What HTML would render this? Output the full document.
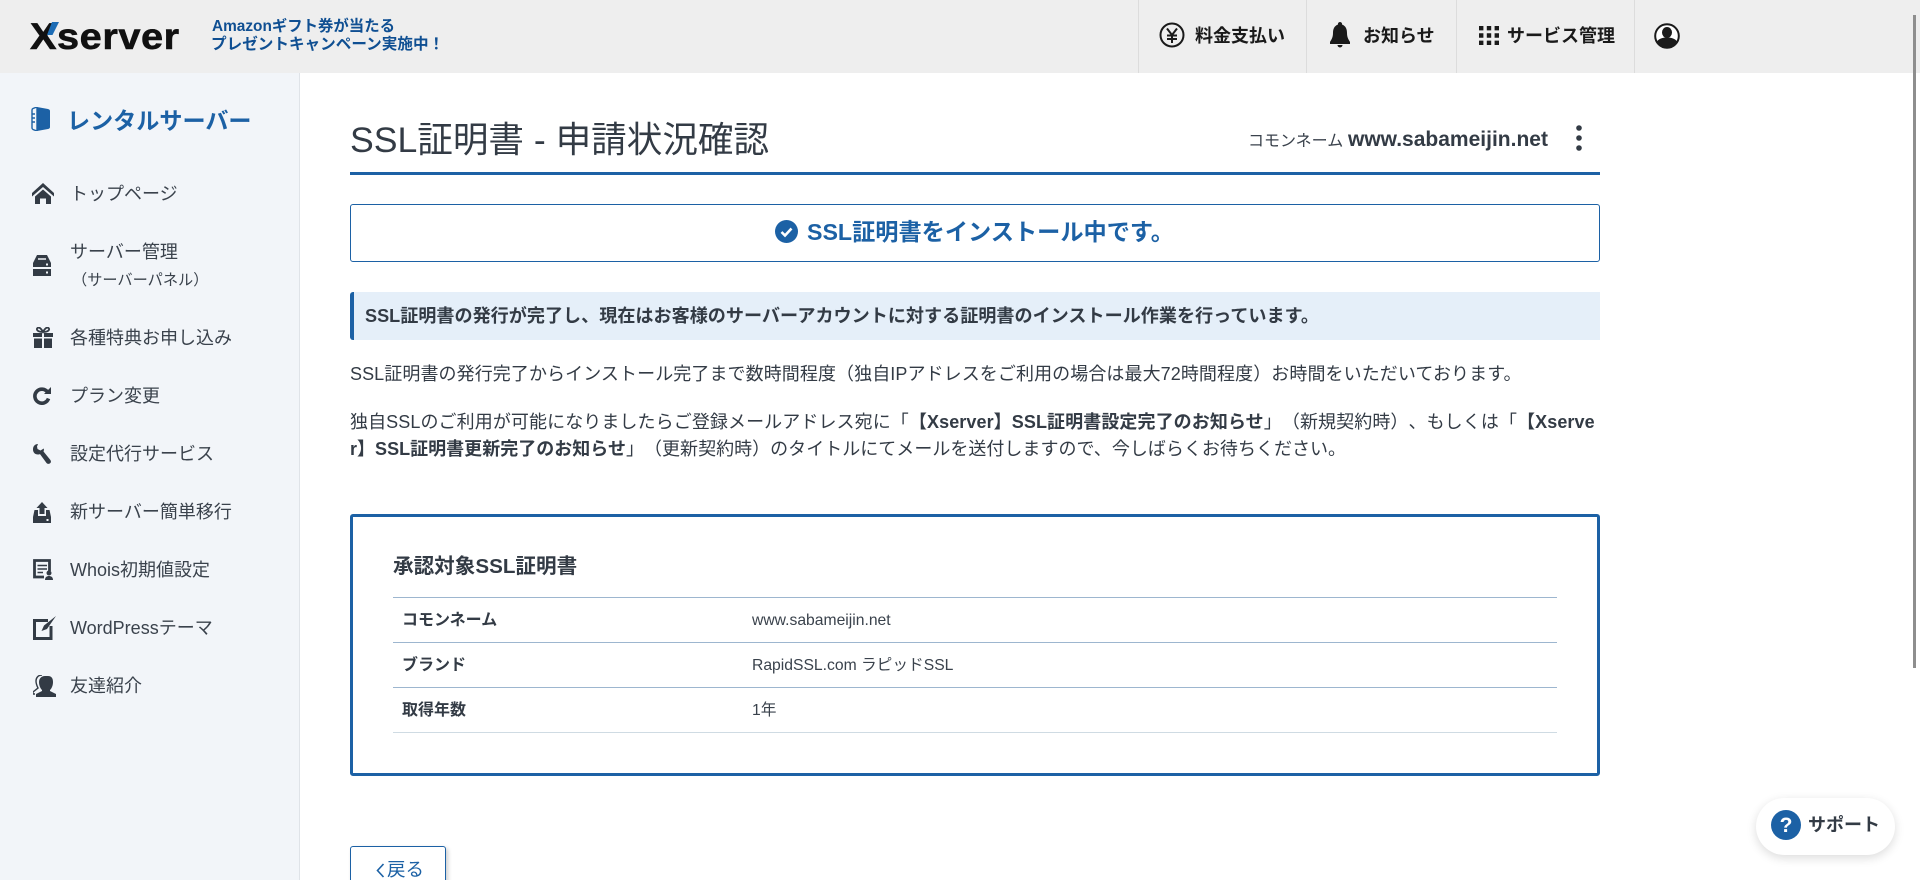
<!DOCTYPE html>
<html lang="ja"><head><meta charset="utf-8"><title>SSL証明書 - 申請状況確認</title>
<style>
*{box-sizing:border-box}
html,body{margin:0;padding:0;width:1920px;height:880px;overflow:hidden;background:#fff}
body{position:relative;font-family:"Liberation Sans","Noto Sans CJK JP",sans-serif;color:#333b45;font-size:18px;text-spacing-trim:space-all}
.a{position:absolute;white-space:nowrap}
#hd{left:0;top:0;width:1920px;height:73px;background:#eee}
.sep{position:absolute;top:0;width:1px;height:73px;background:#dcdcdc}
.hi{font-weight:bold;color:#1a1a1a;font-size:18px;line-height:24px;top:24px}
#sb{left:0;top:73px;width:300px;height:807px;background:#f2f5f9;border-right:1px solid #dfe3e8}
.n{left:70px;font-size:18px;line-height:26px;color:#3a424c}
svg{position:absolute;display:block}
b{font-weight:bold}
.rule{position:absolute;left:393px;width:1164px;height:1px;background:#9db6cf}
.th{left:402px;font-size:16px;font-weight:bold;line-height:22px;color:#333b45}
.td{left:752px;font-size:15.7px;line-height:22px;color:#3a424c}
</style></head><body>
<div class="a" id="hd"></div>
<div class="a" style="left:30px;top:13px;font-size:37.5px;font-weight:bold;line-height:46px;color:#111;letter-spacing:.5px;-webkit-text-stroke:.6px #111;transform:scaleX(1.06);transform-origin:left center">Xserver</div>
<svg style="left:47px;top:22px" width="12" height="13" viewBox="0 0 12 13"><path d="M5 0H12L5.500 13H0Z" fill="#1c6cb5"/></svg>
<div class="a" style="left:212px;top:18px;font-size:15.4px;font-weight:bold;line-height:18px;color:#0f4f92">Amazonギフト券が当たる</div>
<div class="a" style="left:211px;top:36px;font-size:15.6px;font-weight:bold;line-height:18px;color:#0f4f92">プレゼントキャンペーン実施中！</div>

<div class="sep" style="left:1138px"></div><div class="sep" style="left:1306px"></div><div class="sep" style="left:1456px"></div><div class="sep" style="left:1634px"></div>
<svg style="left:1159px;top:22px" width="26" height="26" viewBox="0 0 26 26"><circle cx="13" cy="13" r="11.500" fill="none" stroke="#1a1a1a" stroke-width="2"/><path d="M8 6.500L13 13L18 6.500M8 13.500H18M8 17H18M13 13V21" fill="none" stroke="#1a1a1a" stroke-width="2"/></svg>
<div class="a hi" style="left:1195px">料金支払い</div>
<svg style="left:1329px;top:22px" width="22" height="26" viewBox="0 0 22 26"><path d="M11 0a2 2 0 0 1 2 2.500C17 4 18 7.500 18 11c0 5 2 7 3 9v2H1v-2c1-2 3-4 3-9 0-3.500 1-7 5-8.500A2 2 0 0 1 11 0ZM8.500 23h5a2.500 2.500 0 0 1-5 0Z" fill="#1a1a1a"/></svg>
<div class="a hi" style="left:1363px">お知らせ</div>
<svg style="left:1479px;top:26px" width="20" height="19" viewBox="0 0 20 19" fill="#1a1a1a"><path d="M0 0h4.400v4.400H0zM7.800 0h4.400v4.400H7.800zM15.600 0h4.400v4.400h-4.400zM0 7.300h4.400v4.400H0zM7.800 7.300h4.400v4.400H7.800zM15.600 7.300h4.400v4.400h-4.400zM0 14.600h4.400V19H0zM7.800 14.600h4.400V19H7.800zM15.600 14.600h4.400V19h-4.400z"/></svg>
<div class="a hi" style="left:1507px">サービス管理</div>
<svg style="left:1654px;top:23px" width="26" height="26" viewBox="0 0 26 26"><circle cx="13" cy="13" r="11.800" fill="#fff" stroke="#1a1a1a" stroke-width="2"/><ellipse cx="13" cy="9.500" rx="5" ry="5.500" fill="#1a1a1a"/><path d="M2.500 19c2-3 5.500-4.500 10.500-4.500s8.500 1.500 10.500 4.500A12 12 0 0 1 2.500 19Z" fill="#1a1a1a"/></svg>

<div class="a" style="left:1913px;top:15px;width:3px;height:653px;background:#8e8e8e"></div>

<div class="a" id="sb"></div>
<svg style="left:30px;top:107px" width="20" height="24" viewBox="0 0 20 24"><path d="M7 0L18 2Q20 2.500 20 4V20Q20 21.500 18 22L7 24Z" fill="#1c61a5"/><path d="M2 3Q2 2 3 1.500L7 0V24L3 22.500Q2 22 2 21Z" fill="#f2f5f9" stroke="#1c61a5" stroke-width="1.400"/><path d="M2 7H5M2 11H5M2 15H5" stroke="#1c61a5" stroke-width="1.500"/></svg>
<div class="a" style="left:67px;top:104px;font-size:23.1px;font-weight:bold;line-height:34px;color:#1c61a5">レンタルサーバー</div>

<svg style="left:32px;top:183px" width="22" height="21" viewBox="0 0 22 21" fill="#333b45"><path d="M11 0L22 10V13.500L11 4L0 13.500V10Z"/><path d="M3 13.500L11 6.500L19 13.500V21H14V15.500H8V21H3Z"/></svg>
<div class="a n" style="top:181px">トップページ</div>
<svg style="left:33px;top:255px" width="18" height="21" viewBox="0 0 18 21" fill="#333b45"><path d="M4 0H14L18 8V12H0V8Z"/><rect x="0" y="14" width="18" height="7"/><path d="M5 4H13" stroke="#f2f5f9" stroke-width="1.500"/><rect x="13" y="16.500" width="2" height="2" fill="#f2f5f9"/><rect x="13" y="8.500" width="2" height="2" fill="#f2f5f9"/></svg>
<div class="a n" style="top:239px">サーバー管理</div>
<div class="a" style="left:72px;top:269px;font-size:15.2px;line-height:24px;color:#3a424c">（サーバーパネル）</div>
<svg style="left:33px;top:327px" width="20" height="21" viewBox="0 0 20 21" fill="#333b45"><path d="M0 6H9V10H0ZM11 6H20V10H11ZM1 11.500H9V21H1ZM11 11.500H19V21H11Z"/><path d="M10 5C8 1 6 0 4.500 1S4 5 10 5C16 5 17 2 15.500 1S12 1 10 5Z" fill="none" stroke="#333b45" stroke-width="1.800"/></svg>
<div class="a n" style="top:325px">各種特典お申し込み</div>
<svg style="left:33px;top:387px" width="18" height="18" viewBox="0 0 18 18"><path d="M14.500 5A7 7 0 1 0 15.500 11.500" fill="none" stroke="#333b45" stroke-width="3.600"/><path d="M11 7H18V0Z" fill="#333b45"/></svg>
<div class="a n" style="top:383px">プラン変更</div>
<svg style="left:33px;top:444px" width="18" height="20" viewBox="0 0 18 20"><path d="M5 0C2 0 0 2 0 5.500c0 3 2 5 5 5 .800 0 1.500-.2 2-.4L13.500 19c1 1.200 3 1.200 4-.1.700-1 .5-2-.2-3L10.500 7.500C11 6.500 11 5.500 10.800 4.500L7.500 6.500 4.500 5 4 2.500Z" fill="#333b45"/></svg>
<div class="a n" style="top:441px">設定代行サービス</div>
<svg style="left:33px;top:502px" width="18" height="21" viewBox="0 0 18 21" fill="#333b45"><path d="M9 0L14.500 6H11.500V12H6.500V6H3.500Z"/><path d="M1.500 8H5V14H13V8H16.500L18 15V21H0V15Z"/><rect x="13.500" y="17" width="2" height="2" fill="#f2f5f9"/></svg>
<div class="a n" style="top:499px">新サーバー簡単移行</div>
<svg style="left:33px;top:559px" width="20" height="21" viewBox="0 0 20 21"><path d="M16.500 12V1.500H1.500V18H11" fill="none" stroke="#333b45" stroke-width="2.800"/><path d="M4.500 6.500H14M4.500 10H14M4.500 13.500H10" stroke="#333b45" stroke-width="1.600"/><circle cx="16" cy="14" r="2.500" fill="#333b45"/><path d="M12 21C12 18 14 17 16 17S20 18 20 21Z" fill="#333b45"/></svg>
<div class="a n" style="top:557px">Whois初期値設定</div>
<svg style="left:33px;top:616px" width="23" height="24" viewBox="0 0 23 24"><path d="M15 4.500H1.500V22.500H18V10" fill="none" stroke="#333b45" stroke-width="3"/><path d="M23 0L11 9.500 8.500 15 14 13Z" fill="#333b45"/></svg>
<div class="a n" style="top:615px">WordPressテーマ</div>
<svg style="left:33px;top:675px" width="23" height="22" viewBox="0 0 23 22" fill="#333b45"><path d="M15 1C19 1 20 4 20 7c0 3-1 6-3 8v1l6 3v3H3v-3l6-3v-1c-2-2-3-5-3-8 0-3 2-6 6-6Z"/><path d="M9 0C5 0 3 3 3 6c0 3 1 5 2 7l-5 4v2h2" fill="none" stroke="#333b45" stroke-width="1.400"/></svg>
<div class="a n" style="top:673px">友達紹介</div>

<div class="a" style="left:350px;top:117px;font-size:35.6px;line-height:46px;color:#333b45">SSL証明書 - 申請状況確認</div>
<div class="a" style="left:1248px;top:131px;font-size:16px;line-height:22px;color:#3a424c">コモンネーム</div>
<div class="a" style="left:1348px;top:127px;font-size:21px;font-weight:bold;line-height:26px;color:#333b45">www.sabameijin.net</div>
<svg style="left:1574px;top:125px" width="10" height="26" viewBox="0 0 10 26" fill="#333b45"><circle cx="5" cy="3" r="2.800"/><circle cx="5" cy="13" r="2.800"/><circle cx="5" cy="23" r="2.800"/></svg>
<div class="a" style="left:350px;top:172px;width:1250px;height:3px;background:#1c61a5"></div>

<div class="a" style="left:350px;top:204px;width:1250px;height:58px;border:1px solid #1c61a5;border-radius:3px"></div>
<svg style="left:775px;top:220px" width="23" height="23" viewBox="0 0 23 23"><circle cx="11.500" cy="11.500" r="11.500" fill="#1c61a5"/><path d="M6.500 12L10 15.500L16.500 8.500" fill="none" stroke="#fff" stroke-width="2.600"/></svg>
<div class="a" style="left:807px;top:216px;font-size:23.2px;font-weight:bold;line-height:32px;color:#1c61a5">SSL証明書をインストール中です。</div>

<div class="a" style="left:350px;top:292px;width:1250px;height:48px;background:#e5eff9;border-left:4px solid #1c61a5;border-radius:3px 0 0 3px"></div>
<div class="a" style="left:365px;top:303px;font-size:18.1px;font-weight:bold;line-height:26px">SSL証明書の発行が完了し、現在はお客様のサーバーアカウントに対する証明書のインストール作業を行っています。</div>
<div class="a" style="left:350px;top:361px;line-height:27px;letter-spacing:.085px">SSL証明書の発行完了からインストール完了まで数時間程度（独自IPアドレスをご利用の場合は最大72時間程度）お時間をいただいております。</div>
<div class="a" style="left:350px;top:409px;line-height:27px;letter-spacing:.09px">独自SSLのご利用が可能になりましたらご登録メールアドレス宛に「<b>【Xserver】SSL証明書設定完了のお知らせ</b>」（新規契約時）、もしくは「<b>【Xserve</b></div>
<div class="a" style="left:350px;top:436px;line-height:27px;letter-spacing:.02px"><b>r】SSL証明書更新完了のお知らせ</b>」（更新契約時）のタイトルにてメールを送付しますので、今しばらくお待ちください。</div>

<div class="a" style="left:350px;top:514px;width:1250px;height:262px;border:3px solid #1c61a5;border-radius:3px"></div>
<div class="a" style="left:393px;top:552px;font-size:20.600px;font-weight:bold;line-height:30px">承認対象SSL証明書</div>
<div class="rule" style="top:597px"></div><div class="rule" style="top:642px"></div><div class="rule" style="top:687px"></div><div class="rule" style="top:732px;background:#cfdbe3"></div>
<div class="a th" style="top:610px">コモンネーム</div><div class="a td" style="top:610px">www.sabameijin.net</div>
<div class="a th" style="top:655px">ブランド</div><div class="a td" style="top:655px">RapidSSL.com ラピッドSSL</div>
<div class="a th" style="top:700px">取得年数</div><div class="a td" style="top:700px">1年</div>

<div class="a" style="left:350px;top:846px;width:96px;height:50px;border:1px solid #1c61a5;border-radius:3px;background:#fff;box-shadow:2px 2px 4px rgba(0,0,0,.2)"></div>
<svg style="left:376px;top:863px" width="9" height="15" viewBox="0 0 9 15"><path d="M7.500 1L1.500 7.500L7.500 14" fill="none" stroke="#1c61a5" stroke-width="1.600"/></svg>
<div class="a" style="left:387px;top:857px;font-size:18.500px;line-height:26px;color:#1c61a5">戻る</div>

<div class="a" style="left:1756px;top:798px;width:139px;height:57px;border-radius:29px;background:#fff;box-shadow:0 3px 10px rgba(0,0,0,.14)"></div>
<svg style="left:1771px;top:810px" width="30" height="30" viewBox="0 0 30 30"><circle cx="15" cy="15" r="15" fill="#1c61a5"/><text x="15" y="22" font-family="Liberation Sans,sans-serif" font-size="21" font-weight="bold" fill="#fff" text-anchor="middle">?</text></svg>
<div class="a" style="left:1808px;top:812px;font-size:18px;font-weight:bold;line-height:26px;color:#333b45">サポート</div>
</body></html>
